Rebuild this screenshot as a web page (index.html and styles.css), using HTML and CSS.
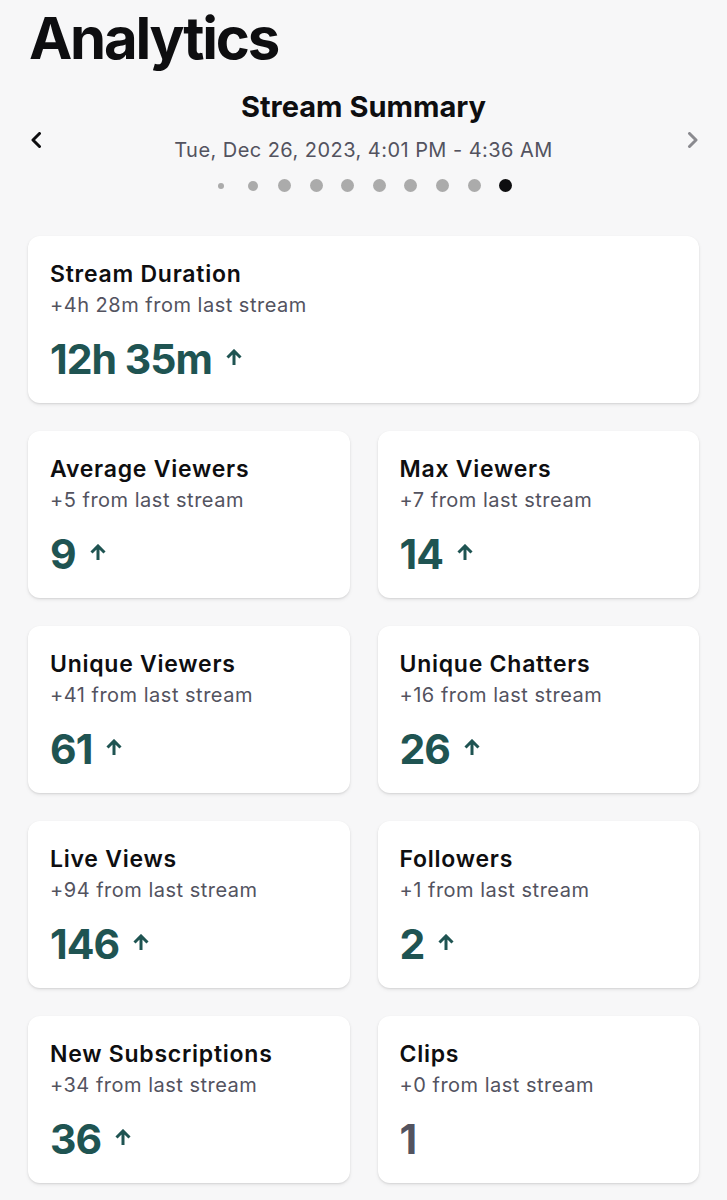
FILE: index.html
```html
<!DOCTYPE html>
<html lang="en">
<head>
<meta charset="utf-8">
<title>Analytics</title>
<link rel="stylesheet" href="styles.css">
</head>
<body>
<main class="page">
  <h1 class="page-title">Analytics</h1>

  <header class="summary">
    <button class="nav nav-prev" aria-label="Previous stream">
      <svg width="12" height="16" viewBox="0 0 12 16"><path d="M9.5 1.5 L3 8 L9.5 14.5" fill="none" stroke="currentColor" stroke-width="3" stroke-linecap="round" stroke-linejoin="round"/></svg>
    </button>
    <div class="summary-center">
      <h2 class="summary-title">Stream Summary</h2>
      <p class="summary-date">Tue, Dec 26, 2023, 4:01 PM - 4:36 AM</p>
      <div class="dots">
        <span class="dot dot-xs"></span>
        <span class="dot dot-sm"></span>
        <span class="dot"></span>
        <span class="dot"></span>
        <span class="dot"></span>
        <span class="dot"></span>
        <span class="dot"></span>
        <span class="dot"></span>
        <span class="dot"></span>
        <span class="dot dot-active"></span>
      </div>
    </div>
    <button class="nav nav-next" aria-label="Next stream">
      <svg width="12" height="16" viewBox="0 0 12 16"><path d="M2.5 1.5 L9 8 L2.5 14.5" fill="none" stroke="currentColor" stroke-width="3" stroke-linecap="round" stroke-linejoin="round"/></svg>
    </button>
  </header>

  <section class="cards">
    <article class="card card-wide">
      <h3 class="card-title">Stream Duration</h3>
      <p class="card-sub">+4h 28m from last stream</p>
      <div class="card-value">12h 35m <svg class="arrow" width="16" height="17" viewBox="0 0 16 17"><path d="M8 16 V2 M1.5 8.5 L8 2 L14.5 8.5" fill="none" stroke="currentColor" stroke-width="3"/></svg></div>
    </article>
    <article class="card">
      <h3 class="card-title">Average Viewers</h3>
      <p class="card-sub">+5 from last stream</p>
      <div class="card-value">9 <svg class="arrow" width="16" height="17" viewBox="0 0 16 17"><path d="M8 16 V2 M1.5 8.5 L8 2 L14.5 8.5" fill="none" stroke="currentColor" stroke-width="3"/></svg></div>
    </article>
    <article class="card">
      <h3 class="card-title">Max Viewers</h3>
      <p class="card-sub">+7 from last stream</p>
      <div class="card-value">14 <svg class="arrow" width="16" height="17" viewBox="0 0 16 17"><path d="M8 16 V2 M1.5 8.5 L8 2 L14.5 8.5" fill="none" stroke="currentColor" stroke-width="3"/></svg></div>
    </article>
    <article class="card">
      <h3 class="card-title">Unique Viewers</h3>
      <p class="card-sub">+41 from last stream</p>
      <div class="card-value">61 <svg class="arrow" width="16" height="17" viewBox="0 0 16 17"><path d="M8 16 V2 M1.5 8.5 L8 2 L14.5 8.5" fill="none" stroke="currentColor" stroke-width="3"/></svg></div>
    </article>
    <article class="card">
      <h3 class="card-title">Unique Chatters</h3>
      <p class="card-sub">+16 from last stream</p>
      <div class="card-value">26 <svg class="arrow" width="16" height="17" viewBox="0 0 16 17"><path d="M8 16 V2 M1.5 8.5 L8 2 L14.5 8.5" fill="none" stroke="currentColor" stroke-width="3"/></svg></div>
    </article>
    <article class="card">
      <h3 class="card-title">Live Views</h3>
      <p class="card-sub">+94 from last stream</p>
      <div class="card-value">146 <svg class="arrow" width="16" height="17" viewBox="0 0 16 17"><path d="M8 16 V2 M1.5 8.5 L8 2 L14.5 8.5" fill="none" stroke="currentColor" stroke-width="3"/></svg></div>
    </article>
    <article class="card">
      <h3 class="card-title">Followers</h3>
      <p class="card-sub">+1 from last stream</p>
      <div class="card-value">2 <svg class="arrow" width="16" height="17" viewBox="0 0 16 17"><path d="M8 16 V2 M1.5 8.5 L8 2 L14.5 8.5" fill="none" stroke="currentColor" stroke-width="3"/></svg></div>
    </article>
    <article class="card">
      <h3 class="card-title">New Subscriptions</h3>
      <p class="card-sub">+34 from last stream</p>
      <div class="card-value">36 <svg class="arrow" width="16" height="17" viewBox="0 0 16 17"><path d="M8 16 V2 M1.5 8.5 L8 2 L14.5 8.5" fill="none" stroke="currentColor" stroke-width="3"/></svg></div>
    </article>
    <article class="card">
      <h3 class="card-title">Clips</h3>
      <p class="card-sub">+0 from last stream</p>
      <div class="card-value card-value-neutral">1</div>
    </article>
  </section>
</main>
</body>
</html>
```

FILE: styles.css
```css
* { box-sizing: border-box; }

html, body {
  margin: 0;
  padding: 0;
  background: #f7f7f8;
}

body {
  font-family: Inter, "Liberation Sans", sans-serif;
  color: #0e0e10;
}

.page {
  padding: 0 28px 40px;
}

.page-title {
  margin: 3px 0 0 1px;
  font-size: 58px;
  line-height: 70px;
  font-weight: 700;
  letter-spacing: -2.2px;
}

.summary {
  display: grid;
  grid-template-columns: 16px 1fr 16px;
  align-items: start;
  margin-top: 16px;
}

.nav {
  margin: 0;
  padding: 0;
  border: 0;
  background: none;
  display: flex;
  margin-top: 43px;
  height: 16px;
}

.nav-prev { color: #0e0e10; justify-content: flex-start; padding-left: 2px; }
.nav-next { color: #8a8a8f; justify-content: flex-end; }

.summary-center {
  display: flex;
  flex-direction: column;
  align-items: center;
}

.summary-title {
  margin: 0;
  font-size: 29px;
  line-height: 36px;
  font-weight: 700;
  letter-spacing: 0;
}

.summary-date {
  margin: 11px 0 0;
  font-size: 20px;
  line-height: 28px;
  letter-spacing: 0.45px;
  color: #53535f;
}

.dots {
  display: flex;
  align-items: center;
  margin-top: 15px;
  height: 13px;
}

.dot {
  width: 13px;
  height: 13px;
  border-radius: 50%;
  background: #ababab;
  margin: 0 9.3px;
}

.dot-xs { width: 6px; height: 6px; margin: 0 12.8px; }
.dot-sm { width: 10px; height: 10px; margin: 0 10.8px; }
.dot-active { background: #0e0e10; }

.cards {
  display: grid;
  grid-template-columns: 1fr 1fr;
  gap: 28px;
  margin-top: 44px;
}

.card {
  background: #ffffff;
  border-radius: 12px;
  box-shadow: 0 1px 2px rgba(0, 0, 0, 0.10), 0 2px 4px rgba(0, 0, 0, 0.06);
  height: 167px;
  padding: 23px 22px 0;
}

.card-wide { grid-column: 1 / -1; }

.card-title {
  margin: 0;
  font-size: 23px;
  line-height: 30px;
  font-weight: 600;
  letter-spacing: 0.75px;
}

.card-sub {
  margin: 1px 0 0;
  font-size: 20px;
  line-height: 30px;
  letter-spacing: 0.5px;
  color: #53535f;
}

.card-value {
  display: flex;
  align-items: center;
  gap: 14px;
  margin-top: 14px;
  font-size: 41px;
  line-height: 50px;
  font-weight: 700;
  letter-spacing: -1px;
  color: #1f5452;
}

.card-value .arrow { margin-top: -3px; }

.card-value-neutral { color: #53535f; }
```
